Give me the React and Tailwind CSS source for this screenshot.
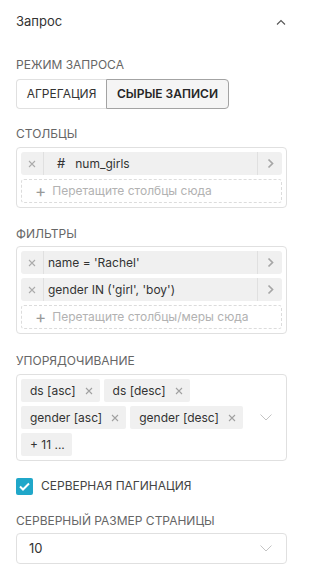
import React from "react";

const labelStyle = "text-[12px] leading-4 text-[#666666] uppercase";

const XIcon = ({ className = "", size = 8 }) => (
  <svg width={size} height={size} viewBox="0 0 8 8" className={className}>
    <path d="M1 1L7 7M7 1L1 7" stroke="currentColor" strokeWidth="1.1" />
  </svg>
);

const ChevronRight = () => (
  <svg width="7" height="11" viewBox="0 0 7 11">
    <path d="M1.5 1.5L5.5 5.5L1.5 9.5" stroke="#a6a6a6" strokeWidth="1.7" fill="none" />
  </svg>
);

const ChevronDown = () => (
  <svg width="12" height="7" viewBox="0 0 12 7">
    <path d="M0.5 0.5L6 6L11.5 0.5" stroke="#c4c4c4" strokeWidth="1" fill="none" />
  </svg>
);

const ItemRow = ({ children }) => (
  <div className="flex h-[23px] items-stretch rounded-[3px] bg-[#f0f0f0] text-[12px] text-[#333]">
    <div className="flex w-[23px] items-center justify-center border-r border-[#e0e0e0] text-[#ababab]">
      <XIcon />
    </div>
    <div className="flex flex-1 items-center pl-[4px]">{children}</div>
    <div className="flex w-[25px] items-center justify-center border-l border-[#e0e0e0]">
      <ChevronRight />
    </div>
  </div>
);

const DropZone = ({ text }) => (
  <div className="flex h-[24px] items-center rounded-[3px] border border-dashed border-[#dcdcdc] pl-[13px] text-[12px] text-[#b2b2b2]">
    <span className="mr-[6px] text-[17px] leading-none text-[#999]">+</span>
    {text}
  </div>
);

const Tag = ({ children, close = true }) => (
  <div className="flex h-[23px] items-center rounded-[2px] bg-[#f0f0f0] pl-[9px] pr-[7px] text-[12px] text-[#333]">
    <span>{children}</span>
    {close && <XIcon className="ml-[9px] text-[#a0a0a0]" />}
  </div>
);

export default function App() {
  return (
    <div className="w-[303px] bg-white px-4 font-['Inter',sans-serif] text-[#333]">
      {/* header */}
      <div className="flex h-11 items-center justify-between">
        <span className="text-[13px] text-[#333]">Запрос</span>
        <svg width="10" height="6" viewBox="0 0 10 6" className="mr-[1px]">
          <path d="M1 5.5L5 1.5L9 5.5" stroke="#555" strokeWidth="1.1" fill="none" />
        </svg>
      </div>

      <div className={`${labelStyle} mt-[13px]`}>Режим запроса</div>
      <div className="mt-[6px] flex h-[30px] w-[213px] text-[12px] uppercase">
        <div className="flex w-[90px] items-center justify-center rounded-l-[4px] border border-r-0 border-[#e0e0e0] text-[#333]">
          Агрегация
        </div>
        <div className="flex flex-1 items-center justify-center rounded-r-[4px] border border-[#a3a3a3] bg-[#f5f5f5] font-semibold text-[#262626]">
          Сырые записи
        </div>
      </div>

      <div className={`${labelStyle} mt-[17px]`}>Столбцы</div>
      <div className="mt-[5px] flex flex-col gap-1 rounded-[4px] border border-[#e0e0e0] p-1">
        <ItemRow>
          <span className="ml-[9px] mr-[10px] text-[13px] text-[#333]">#</span>
          num_girls
        </ItemRow>
        <DropZone text="Перетащите столбцы сюда" />
      </div>

      <div className={`${labelStyle} mt-[18px]`}>Фильтры</div>
      <div className="mt-[4px] flex flex-col gap-1 rounded-[4px] border border-[#e0e0e0] p-1">
        <ItemRow>name = 'Rachel'</ItemRow>
        <ItemRow>gender IN ('girl', 'boy')</ItemRow>
        <DropZone text="Перетащите столбцы/меры сюда" />
      </div>

      <div className={`${labelStyle} mt-[19px]`}>Упорядочивание</div>
      <div className="mt-[5px] flex items-center rounded-[4px] border border-[#e0e0e0] p-1 pr-[14px]">
        <div className="flex flex-1 flex-col gap-[4px]">
          <div className="flex gap-1">
            <Tag>ds [asc]</Tag>
            <Tag>ds [desc]</Tag>
          </div>
          <div className="flex gap-1">
            <Tag>gender [asc]</Tag>
            <Tag>gender [desc]</Tag>
          </div>
          <div className="flex">
            <Tag close={false}>+ 11 ...</Tag>
          </div>
        </div>
        <ChevronDown />
      </div>

      <div className="mt-[16px] flex items-center">
        <div className="flex h-[17px] w-[17px] items-center justify-center rounded-[2px] bg-[#20a7c9]">
          <svg width="11" height="9" viewBox="0 0 11 9">
            <path d="M1 4.5L4 7.5L10 1.5" stroke="white" strokeWidth="2" fill="none" />
          </svg>
        </div>
        <span className="ml-[8px] text-[12px] uppercase text-[#444]">Серверная пагинация</span>
      </div>

      <div className={`${labelStyle} mt-[18px]`}>Серверный размер страницы</div>
      <div className="mt-[4px] flex h-[31px] items-center justify-between rounded-[4px] border border-[#e0e0e0] pl-3 pr-[14px] text-[13px] text-[#333]">
        <span>10</span>
        <ChevronDown />
      </div>
    </div>
  );
}
